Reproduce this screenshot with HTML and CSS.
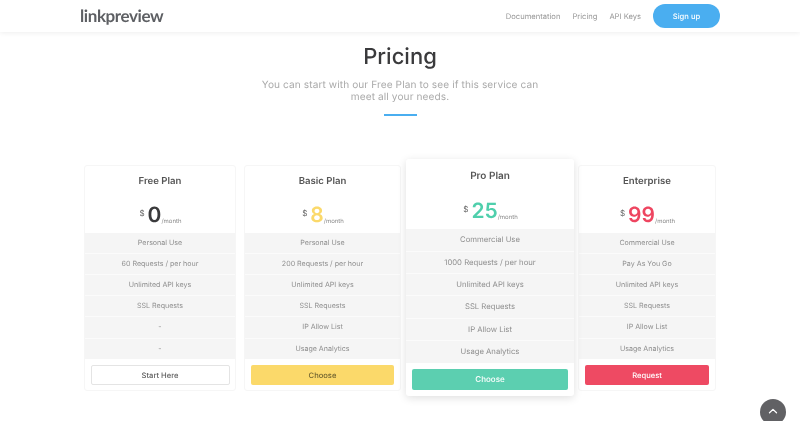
FILE: index.html
```html
<!DOCTYPE html>
<html lang="en">
<head>
<meta charset="utf-8">
<title>Pricing - linkpreview</title>
<link rel="stylesheet" href="styles.css">
</head>
<body>
<header class="nav">
  <a class="logo" href="#">linkpreview</a>
  <nav class="links">
    <a href="#">Documentation</a>
    <a href="#">Pricing</a>
    <a href="#">API Keys</a>
    <a class="signup" href="#">Sign up</a>
  </nav>
</header>
<main class="main">
  <h1 class="title">Pricing</h1>
  <p class="lead">You can start with our Free Plan to see if this service can meet all your needs.</p>
  <div class="rule"></div>
  <section class="plans">
    <article class="plan plan-free">
      <h2 class="name">Free Plan</h2>
      <div class="price"><span class="cur">$</span><span class="amt">0</span><span class="per">/month</span></div>
      <ul class="features">
        <li>Personal Use</li><li>60 Requests / per hour</li><li>Unlimited API keys</li><li>SSL Requests</li><li>-</li><li>-</li>
      </ul>
      <div class="action"><a class="btn btn-free" href="#">Start Here</a></div>
    </article>
    <article class="plan plan-basic">
      <h2 class="name">Basic Plan</h2>
      <div class="price"><span class="cur">$</span><span class="amt">8</span><span class="per">/month</span></div>
      <ul class="features">
        <li>Personal Use</li><li>200 Requests / per hour</li><li>Unlimited API keys</li><li>SSL Requests</li><li>IP Allow List</li><li>Usage Analytics</li>
      </ul>
      <div class="action"><a class="btn btn-basic" href="#">Choose</a></div>
    </article>
    <article class="plan plan-pro">
      <h2 class="name">Pro Plan</h2>
      <div class="price"><span class="cur">$</span><span class="amt">25</span><span class="per">/month</span></div>
      <ul class="features">
        <li>Commercial Use</li><li>1000 Requests / per hour</li><li>Unlimited API keys</li><li>SSL Requests</li><li>IP Allow List</li><li>Usage Analytics</li>
      </ul>
      <div class="action"><a class="btn btn-pro" href="#">Choose</a></div>
    </article>
    <article class="plan plan-ent">
      <h2 class="name">Enterprise</h2>
      <div class="price"><span class="cur">$</span><span class="amt">99</span><span class="per">/month</span></div>
      <ul class="features">
        <li>Commercial Use</li><li>Pay As You Go</li><li>Unlimited API keys</li><li>SSL Requests</li><li>IP Allow List</li><li>Usage Analytics</li>
      </ul>
      <div class="action"><a class="btn btn-ent" href="#">Request</a></div>
    </article>
  </section>
</main>
<a class="top" href="#" aria-label="Back to top">
  <svg width="12" height="8" viewBox="0 0 12 8"><path d="M2.5 5.8 6 2.4l3.5 3.4" fill="none" stroke="#fff" stroke-width="1.3" stroke-linecap="round" stroke-linejoin="round"/></svg>
</a>
</body>
</html>
```

FILE: styles.css
```css
* { box-sizing: border-box; }
html, body { margin: 0; height: 421px; overflow: hidden; background: #fff; }
body { font-family: Inter, "Liberation Sans", sans-serif; color: #8f8f8f; position: relative; text-rendering: geometricPrecision; filter: blur(.3px); }
a { text-decoration: none; color: inherit; }

.nav {
  height: 32px;
  display: flex;
  align-items: center;
  justify-content: space-between;
  padding: 0 80px;
  background: #fff;
  box-shadow: 0 1px 5px rgba(0,0,0,.07);
}
.logo { font-family: Lato, sans-serif; font-size: 17px; font-weight: 700; letter-spacing: -.4px; color: #5d5f63; margin-top: -2px; }
.links { display: flex; align-items: center; font-size: 7.6px; color: #989898; }
.links a { margin-left: 12px; }
.links .signup {
  width: 67px; height: 24px; margin: 0 0 0 12px;
  border-radius: 12px; background: #4aaef0; color: #fff;
  display: flex; align-items: center; justify-content: center; font-weight: 500;
}

.main { display: flex; flex-direction: column; align-items: center; }
.title { margin: 11px 0 0; font-size: 22px; line-height: 28px; font-weight: 500; color: #3a3a3c; }
.lead { margin: 9px 0 0; width: 290px; text-align: center; font-size: 10.1px; line-height: 11.6px; color: #aaa; letter-spacing: .1px; }
.rule { width: 33px; height: 2px; margin-top: 11px; background: #4aaef0; }

.plans {
  display: flex; align-items: center; width: 632px; margin: 43px 0 0 0;
}
.plan { background: #fff; border: 1px solid #f6f6f6; border-radius: 3px; display: flex; flex-direction: column; text-align: center; height: 226px; }
.plan-free { width: 152px; }
.plan-basic { width: 157px; margin-left: 8px; }
.plan-pro { width: 168px; margin-left: 5px; height: 237px; border: 0; position: relative; box-shadow: 0 2px 9px rgba(0,0,0,.13); }
.plan-ent { width: 138px; margin-left: 4px; }

.name { margin: 0; padding-top: 10px; font-size: 9.6px; line-height: 12px; font-weight: 600; color: #555; height: 25px; }
.plan-pro .name { font-size: 10px; padding-top: 11px; }
.price { height: 42px; padding-top: 12px; display: flex; justify-content: center; align-items: flex-start; color: #333; }
.cur { font-size: 8px; line-height: 10px; color: #666; margin: 5px 3px 0 1px; }
.amt { font-size: 21px; line-height: 26px; font-weight: 600; color: #3a3a3c; }
.per { font-size: 6px; line-height: 8px; color: #888; margin-top: 15px; }
.plan-basic .amt { color: #fbd96a; }
.plan-pro .amt { color: #4fcfac; }
.plan-ent .amt { color: #ee4560; }

.features { list-style: none; margin: 0; padding: 0; flex: none; display: flex; flex-direction: column; gap: 1px; background: #fbfbfb; }
.features li { height: 20.2px; line-height: 20px; background: #f5f5f5; font-size: 7.1px; color: #8e8e8e; }
.plan-pro .features li { height: 21.4px; line-height: 21px; font-size: 7.7px; }
.plan-pro .price { height: 45px; padding-top: 15px; }

.action { flex: 1; display: flex; align-items: center; justify-content: center; padding: 2px 6px 0; }
.plan-free .action { padding: 2px 5.5px 0; }
.plan-pro .action { padding-top: 0; }
.btn { flex: 1; height: 20px; border-radius: 2px; display: flex; align-items: center; justify-content: center; font-size: 7.6px; font-weight: 500; }
.btn-free { border: 1px solid #e4e4e4; color: #5f5f5f; background: #fff; }
.btn-basic { background: #fbd96a; color: #6f6330; }
.btn-pro { background: #5ccfb0; color: #fff; height: 21px; font-size: 8px; }
.btn-ent { background: #ee4a63; color: #fff; }

.top {
  position: absolute; left: 760px; top: 399px; width: 26px; height: 26px;
  border-radius: 50%; background: #616164;
  display: flex; align-items: flex-start; justify-content: center; padding-top: 8px;
}
.top svg { display: block; }
```
